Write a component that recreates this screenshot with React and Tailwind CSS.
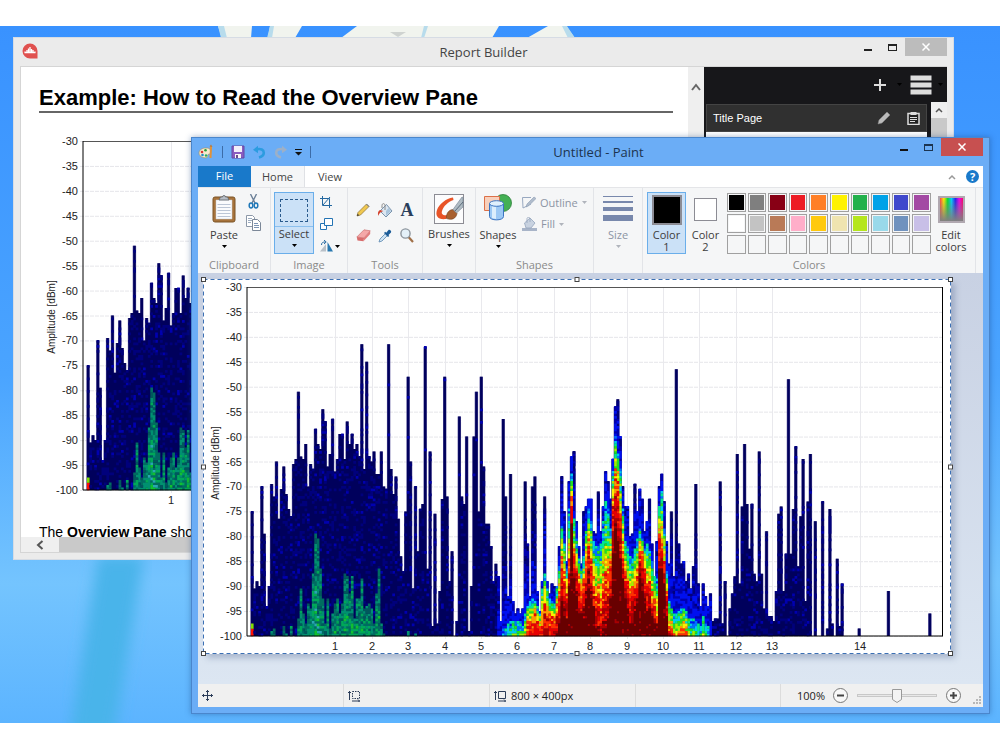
import React, { useState } from "react";

const LEVELS = [
  -75, -90.5, -89, -90, -70, -79.5, -94, -90, -69.5, -72, -65, -76.5, -70.5, -66, -71.5, -74.5, -76, -65.5, -64.5, -51,
  -64, -64.5, -61.5, -70, -65.5, -66.5, -58.5, -61.5, -62.5, -54.5, -57, -66, -63.5, -56.5, -67, -64.5, -59.5, -59.5, -64.5, -57,
  -61.5, -59.5, -62.5, -61.5, -64, -41.5, -66.5, -45, -64, -65, -63, -67.5, -67.5, -63, -70, -70.5, -41.5, -66.5, -71.5, -68,
  -76.5, -84, -87, -75, -48, -65, -90.5, -70, -83, -74.5, -73.5, -42, -86.5, -63, -98, -75.5, -97.5, -91, -72.5, -48,
  -72, -89, -83, -100, -97, -56, -72, -73.5, -60, -99, -90, -60, -51, -75, -48, -66, -77.5, -77.5, -82, -89,
  -85.5, -88, -97, -56.5, -72, -92, -67.5, -93, -95.5, -94.5, -95.5, -94.5, -69, -81.5, -92, -70, -68, -91, -95, -89,
  -72, -89, -91.5, -89.5, -90, -90, -82, -68, -75, -85, -69, -64, -63, -77, -82, -85.5, -75, -74, -72.5, -72.5,
  -79, -79.5, -71, -79, -74, -67, -69, -72.5, -64.5, -54, -52.5, -60, -70, -74, -74, -80, -79.5, -69.5, -75, -70.5,
  -72.5, -79, -77, -72.5, -81.5, -88, -81, -70, -67.5, -73, -81, -85.5, -75, -88, -46.5, -81.5, -85.5, -85, -89, -87.5,
  -90.5, -86, -69.5, -89.5, -94, -89.5, -92, -94, -91.5, -97, -96.5, -96.5, -69, -97.5, -89, -100, -94.5, -91.5, -88, -63.5,
  -89.5, -74, -61.5, -73.5, -82.5, -73.5, -87.5, -89, -63, -87.5, -94.5, -79, -96, -96, -97, -91, -75.5, -74, -91, -83.5,
  -48.5, -83.5, -74.5, -62, -86, -76, -64.5, -93, -73, -63.5, -100, -77, -100, -100, -73, -100, -98.5, -74.5, -97.5, -100,
  -84.5, -98, -89.5,
];

const LONE_LEVELS = { 249: -98.5, 261: -91, 278: -95.5 };

// [bin, top of cyan, top of red, top of dark red] in dB
const HOT = [
  [101, -99, -110, -120], [105, -97, -108, -115], [107, -96.5, -104, -115], [111, -97, -104, -112],
  [113, -93, -98, -104], [116, -92, -96, -105], [118, -95, -98, -104], [119, -90, -96, -102],
  [120, -87, -94, -101], [122, -92, -96, -102], [124, -93, -97, -101], [126, -85, -92, -97],
  [127, -76, -85, -93], [129, -86, -92, -97], [130, -74, -86, -90], [131, -67, -73, -77],
  [132, -76, -84, -88], [134, -84, -89, -95], [135, -86, -91, -96], [136, -83, -90, -96],
  [137, -78, -85, -92], [138, -74, -82, -90], [139, -76, -86, -92], [140, -80, -91, -95],
  [141, -81, -93, -98], [143, -81, -94, -100], [145, -72, -90, -98], [146, -74, -89, -96],
  [147, -78, -86, -93], [148, -66, -74, -83], [149, -59, -69, -78], [150, -63, -70, -80],
  [151, -66, -77, -84], [152, -74, -83, -88], [153, -80, -88, -92], [155, -83, -91, -97],
  [156, -84, -91, -97], [158, -80, -88, -93], [159, -78, -83, -88], [160, -80, -84, -90],
  [161, -82, -87, -93], [162, -81, -90, -95], [163, -82, -90, -94], [164, -84, -93, -96],
  [166, -88, -96, -98], [167, -73, -80, -86], [168, -70, -82, -86], [169, -78, -86, -90],
  [170, -86, -92, -96], [171, -92, -98, -104], [173, -95, -100, -110], [176, -94, -100, -110],
  [177, -94, -98, -110], [180, -96, -104, -112], [184, -97.5, -106, -114], [185, -95.5, -102, -112],
  [188, -99, -110, -118],
];

// weak carriers, which never get past green
const GREEN = {
  8: -98.5, 9: -98, 13: -97.5, 14: -99, 16: -97.5, 19: -96, 20: -90, 21: -95, 22: -97, 23: -93, 24: -94, 25: -87,
  26: -79, 27: -80, 28: -86, 29: -92, 30: -97, 31: -92, 32: -98, 33: -95, 34: -93, 35: -92, 36: -95, 37: -93,
  38: -87, 39: -87.5, 40: -91, 41: -87.5, 42: -96, 43: -92, 44: -92, 45: -88, 46: -94, 47: -93.5, 48: -93,
  49: -94, 50: -97, 51: -91, 52: -86, 53: -97, 54: -99, 64: -98.5, 67: -99,
};

const PALETTE = [
  "#00005c", "#00007c", "#0000b0", "#0010f0", "#0070ff", "#00c8f0", "#00e890", "#20e020",
  "#a0f000", "#f8f000", "#ff9800", "#ff3000", "#e80000", "#a80000", "#680000",
];
const WEAK = ["#00585c", "#006c60", "#009070", "#00a858", "#10c030", "#28a8b0"];

const PX_PER_DB = 349 / 70;
const BIN = 2.438;
const CELL = 2.5;

const X_TICKS = [88, 125, 161, 198, 234, 270, 307, 343, 380, 416, 452, 489, 525, 613];
const Y_TICKS = [-30, -35, -40, -45, -50, -55, -60, -65, -70, -75, -80, -85, -90, -95, -100];

const toY = (db) => (-30 - db) * PX_PER_DB;

const noise = (a, b) => {
  const n = Math.sin(a * 127.1 + b * 311.7) * 43758.5453;
  return n - Math.floor(n);
};

const hotAt = (bin) => {
  for (let k = 1; k < HOT.length; k++) {
    const [b0, ...v0] = HOT[k - 1];
    const [b1, ...v1] = HOT[k];
    if (bin >= b0 && bin <= b1) {
      const t = (bin - b0) / (b1 - b0);
      return v0.map((v, n) => v + (v1[n] - v) * t);
    }
  }
  return null;
};

const paletteIndex = (bin, rnd, db, top) => {
  const hot = hotAt(bin);
  if (!hot) {
    if (top > -62 && rnd < 0.97 && bin > 55) return 0;
    return rnd > 0.94 ? 2 : rnd > 0.74 ? 1 : 0;
  }
  const [cyan, red, dark] = hot;
  let idx;
  if (db > cyan) {
    idx = 3 - (db - cyan) / 6 + (rnd - 0.5) * 2.2;
    return Math.max(0, Math.min(3, Math.round(idx)));
  }
  if (db > red) idx = 4 + ((cyan - db) / (cyan - red)) * 7 + (rnd - 0.5) * 3.5;
  else if (db > dark) idx = 11 + ((red - db) / (red - dark)) * 2 + (rnd - 0.5) * 2.6;
  else idx = rnd > 0.93 ? 13 : 14;
  return Math.max(3, Math.min(14, Math.round(idx)));
};

const buildCells = () => {
  const cells = {};
  const add = (color, x, y) => {
    cells[color] = (cells[color] || "") + `M${x.toFixed(2)} ${y.toFixed(1)}h2.7v2.8h-2.7z`;
  };
  LEVELS.forEach((top, bin) => {
    const x = 3.9 + bin * BIN;
    for (let y = 349 - CELL; y > toY(top) - 1; y -= CELL) {
      const db = -30 - y / PX_PER_DB;
      const rnd = noise(bin + 1, Math.round(y));
      if (bin === 0 && db < -97) {
        add(db < -98 ? "#ff1000" : "#80e000", x, y);
      } else if (GREEN[bin] && db < GREEN[bin]) {
        const n = Math.floor(rnd * 3 + Math.min(2.9, ((GREEN[bin] - db) / 8) * 2 * noise(y, bin)));
        add(WEAK[n], x, y);
      } else {
        const idx = paletteIndex(bin, rnd, db, top);
        if (idx > 0) add(PALETTE[idx], x, y);
      }
    }
  });
  return cells;
};

const CELLS = buildCells();

const ALL_LEVELS = [
  ...LEVELS.map((v, bin) => [bin, v]),
  ...Object.entries(LONE_LEVELS).map(([bin, v]) => [Number(bin), v]),
].filter(([, v]) => v > -100);

const bars = (offset, width) =>
  ALL_LEVELS.map(([bin, v]) => `M${(offset + bin * BIN).toFixed(2)} ${toY(v).toFixed(1)}h${width}V349h-${width}z`).join("");

const BAR_EDGES = bars(3.4, 3.4);
const BAR_CORES = bars(3.9, 2.45);

const Spectrum = () => (
  <svg
    width="748"
    height="375"
    viewBox="0 0 748 375"
    className="block shrink-0"
    fontFamily="'Liberation Sans', sans-serif"
    fontSize="11"
    fill="#222"
  >
    <rect width="748" height="375" fill="#fff" />
    <g transform="translate(44 8)">
      {Y_TICKS.map((t) => (
        <line key={t} x1="-3" x2="696" y1={toY(t) + 0.5} y2={toY(t) + 0.5} stroke="#e6e6ea" strokeDasharray="4 1" />
      ))}
      {X_TICKS.map((x) => (
        <line key={x} x1={x + 0.5} x2={x + 0.5} y1="0" y2="352" stroke="#e9e9ed" />
      ))}
      <path d={BAR_EDGES} fill="#5a549c" />
      <path d={BAR_CORES} fill="#00005c" />
      {Object.entries(CELLS).map(([color, d]) => (
        <path key={color} d={d} fill={color} />
      ))}
      <path d="M0 .5H696" stroke="#555" strokeWidth="1" />
      <path d="M0 0V349M695.5 0V349M0 349H696" stroke="#000" strokeWidth="1" fill="none" />
      {Y_TICKS.map((t) => (
        <text key={t} x="-5" y={toY(t) + 4} textAnchor="end">{t}</text>
      ))}
      {X_TICKS.map((x, i) => (
        <text key={x} x={x} y="363" textAnchor="middle">{i + 1}</text>
      ))}
      <text transform="translate(-28 176) rotate(-90)" textAnchor="middle" fontSize="10">Amplitude [dBm]</text>
    </g>
  </svg>
);

const Caret = ({ className = "text-black" }) => (
  <svg width="5" height="3" viewBox="0 0 5 3" className={className}>
    <path d="M0 0h5L2.5 3z" fill="currentColor" />
  </svg>
);

/* Report Builder */

const ReportWindow = () => (
  <section className="absolute top-[11px] right-[46px] bottom-[163px] left-[13px] flex flex-col border border-[#d6dce4] bg-[#ebebeb] px-1.5 pb-1.5">
    <header className="relative flex h-7 shrink-0 items-start">
      <svg width="16" height="16" viewBox="0 0 16 16" className="mt-[5px] ml-0.5">
        <path d="M8 .5a7.5 7.5 0 0 1 7.5 7.5v7.5H8A7.5 7.5 0 1 1 8 .5z" fill="#e0514f" />
        <path d="M3 9.500v-1M5 10V7M6.500 10V5.500M8 10V4M9.500 10V6M11 10V7M13 9.500v-1M2.500 9.500h11" stroke="#fff" strokeWidth="1.300" />
      </svg>
      <h1 className="absolute inset-x-0 top-1 text-center text-[13px] leading-5 text-[#444]">Report Builder</h1>
      <div className="relative ml-auto flex items-start">
        <button aria-label="Minimize" className="flex h-[18px] w-[25px] items-center justify-center">
          <span className="mt-1.5 h-0.5 w-2 bg-[#222]" />
        </button>
        <button aria-label="Maximize" className="flex h-[18px] w-[25px] items-center justify-center">
          <span className="h-[7px] w-[9px] border border-t-2 border-[#222]" />
        </button>
        <button aria-label="Close" className="flex h-[18px] w-[42px] items-center justify-center bg-[#bcbcbc]">
          <svg width="8" height="8" viewBox="0 0 8 8"><path d="M.5.500l7 7M7.500.500l-7 7" stroke="#fff" strokeWidth="1.500" /></svg>
        </button>
      </div>
    </header>
    <div className="flex min-h-0 flex-1 border border-r-0 border-[#d5d5d5]">
      <div className="flex min-w-0 flex-1 flex-col bg-white">
        <article className="min-h-0 flex-1 overflow-hidden pt-[18px] pr-[15px] pl-[18px] font-['Liberation_Sans',Arial,sans-serif] text-black">
          <h2 className="border-b-2 border-[#666] text-[22px] leading-[26px] font-bold whitespace-nowrap">Example: How to Read the Overview Pane</h2>
          <div className="mt-5 overflow-hidden">
            <Spectrum />
          </div>
          <p className="mt-3.5 text-sm leading-5 whitespace-nowrap">The <b>Overview Pane</b> shows</p>
        </article>
        <div className="flex h-[15px] shrink-0 bg-[#c9c9c9]">
          <button aria-label="Scroll left" className="flex w-[38px] items-center justify-center bg-[#efefef]">
            <svg width="8" height="10" viewBox="0 0 8 10"><path d="M6.500 1L2 5l4.500 4" fill="none" stroke="#555" strokeWidth="2" /></svg>
          </button>
        </div>
      </div>
      <button aria-label="Scroll up" className="flex w-4 justify-center bg-[#efefef] pt-4">
        <svg width="10" height="8" viewBox="0 0 10 8"><path d="M1 7l4-5 4 5" fill="none" stroke="#666" strokeWidth="2" /></svg>
      </button>
      <aside className="w-[243px] bg-[#17171a]">
        <div className="flex h-[35px] items-center justify-end gap-2 pr-1 pl-2">
          <button aria-label="Add page" className="flex items-center gap-2.5">
            <svg width="14" height="14" viewBox="0 0 14 14"><path d="M7 1v12M1 7h12" stroke="#ddd" strokeWidth="2" /></svg>
            <Caret />
          </button>
          <button aria-label="Menu" className="flex items-center gap-1.5">
            <svg width="22" height="22" viewBox="0 0 22 22" fill="#ddd"><path d="M0 1h22v6H0zM0 8h22v6H0zM0 15h22v6H0z" stroke="#17171a" /></svg>
            <Caret />
          </button>
        </div>
        <div className="flex">
          <div className="ml-0.5 flex-1">
            <div className="mt-0.5 flex h-7 items-center gap-4 border border-[#444] bg-[#303030] px-1.5">
              <span className="flex-1 font-['Liberation_Sans',Arial,sans-serif] text-[11px] leading-4 text-white">Title Page</span>
              <button aria-label="Edit page">
                <svg width="14" height="14" viewBox="0 0 14 14"><path d="M1 13l1-4 8-8 3 3-8 8z" fill="#bbb" stroke="#888" strokeWidth=".5" /></svg>
              </button>
              <button aria-label="Copy page">
                <svg width="13" height="14" viewBox="0 0 13 14">
                  <path d="M1 2.500h11v11H1z" fill="#222" stroke="#ddd" strokeWidth="1.500" />
                  <path d="M3.500 1h6v3h-6z" fill="#ddd" />
                  <path d="M3 6.500h7M3 8.500h7M3 10.500h5" stroke="#ddd" />
                </svg>
              </button>
            </div>
            <div className="h-80 bg-white" />
          </div>
          <div className="ml-1 w-4 bg-[#c9c9c9]">
            <button aria-label="Scroll list up" className="flex h-4 w-full items-center justify-center bg-[#efefef]">
              <svg width="8" height="6" viewBox="0 0 8 6"><path d="M1 5l3-3 3 3" fill="none" stroke="#555" strokeWidth="1.500" /></svg>
            </button>
          </div>
        </div>
      </aside>
    </div>
  </section>
);

/* Paint icons */

const PaletteIcon = () => (
  <svg width="16" height="16" viewBox="0 0 16 16">
    <path d="M1 9c0-3 3-5 7-5s5 2 5 4-2 2-3 2.500.5 2-1 3S1 13.500 1 9z" fill="#f4ead0" stroke="#a08850" strokeWidth=".6" />
    <circle cx="4" cy="8" r="1.300" fill="#d33" /><circle cx="7.500" cy="6.200" r="1.300" fill="#2a9d3a" />
    <circle cx="4.500" cy="11" r="1.300" fill="#28c" /><circle cx="8" cy="11.500" r="1.200" fill="#28b060" />
    <path d="M12 2l2 1-.5 11h-2z" fill="#e0923c" /><path d="M11.500 2.500l1.500-2 1.500 2.500" fill="#c07830" />
  </svg>
);

const SaveIcon = () => (
  <svg width="14" height="14" viewBox="0 0 14 14">
    <path d="M1 1h12v12H1z" fill="#8a5cc0" stroke="#6448a4" />
    <path d="M3 1h8v6H3z" fill="#f2effa" /><path d="M4 9h6v4H4z" fill="#f7f4f4" /><path d="M5 10h2v3H5z" fill="#6a4c90" />
  </svg>
);

const UndoIcon = ({ flip, color }) => (
  <svg width="13" height="14" viewBox="0 0 13 14" className={flip ? "-scale-x-100" : ""}>
    <path d="M3 4.500C8 3 10.800 5 10.800 7.800c0 2-1.500 3.800-4.800 4.700" fill="none" stroke={color} strokeWidth="2.600" />
    <path d="M0 4.800L5 .800v7.500z" fill={color} />
  </svg>
);

const PasteIcon = () => (
  <svg width="24" height="29" viewBox="0 0 24 29">
    <rect x="1" y="3" width="22" height="25" rx="2" fill="#a8743c" stroke="#7c5426" />
    <path d="M4 6h16v19H4z" fill="#fafbfd" stroke="#c4c8d0" strokeWidth=".5" />
    <path d="M5.500 10.500h13M5.500 13.500h13M5.500 16.500h13M5.500 19.500h13M5.500 22.500h13" stroke="#bcc6d6" />
    <path d="M7 6l1.500-3h2a1.500 1.500 0 0 1 3 0h2L17 6z" fill="#b8bec6" stroke="#5c626a" strokeWidth=".8" />
  </svg>
);

const ScissorsIcon = () => (
  <svg width="11" height="15" viewBox="0 0 11 15" fill="none">
    <path d="M2.500 0l4.500 9M8.500 0L4 9" stroke="#6c8098" strokeWidth="1.400" />
    <ellipse cx="3" cy="11.500" rx="1.800" ry="2.400" stroke="#2078b8" strokeWidth="1.500" />
    <ellipse cx="8" cy="11.500" rx="1.800" ry="2.400" stroke="#2078b8" strokeWidth="1.500" />
  </svg>
);

const CopyIcon = () => (
  <svg width="15" height="16" viewBox="0 0 15 16">
    <path d="M.5.500h6l2 2v9h-8z" fill="#fff" stroke="#8c98a8" />
    <path d="M2 3.500h4M2 5.500h4M2 7.500h3" stroke="#9cacc0" />
    <path d="M6.500 4.500h5l3 3v8h-8z" fill="#fff" stroke="#7c8898" />
    <path d="M8 8.500h4M8 10.500h5M8 12.500h5" stroke="#7c94b4" />
  </svg>
);

const CropIcon = () => (
  <svg width="12" height="12" viewBox="0 0 12 12" fill="none" stroke="#2468a0">
    <path d="M2.500 0v9.500H12M0 2.500h9.500V12M3 9l7-8" />
  </svg>
);

const ResizeIcon = () => (
  <svg width="13" height="12" viewBox="0 0 13 12" fill="#fff" stroke="#2474b4">
    <path d="M.5 5.500h6v6h-6z" /><path d="M4.500.500h8v7h-8z" />
  </svg>
);

const RotateIcon = () => (
  <svg width="13" height="12" viewBox="0 0 13 12">
    <path d="M0 11.500L6 4v7.500z" fill="#b8c0c8" /><path d="M7.500 2v9.500H13z" fill="#2878b0" />
    <path d="M1.500 5C1.500 2.500 3 2 5 2M4 0l2.200 2L4 4" fill="none" stroke="#2468a0" />
  </svg>
);

const PencilIcon = () => (
  <svg width="14" height="14" viewBox="0 0 14 14">
    <path d="M1 13l1-3.500L10.500 1 13 3.500 4.500 12z" fill="#f0c850" stroke="#8c7030" strokeWidth=".7" />
    <path d="M1 13l.7-2.200 1.500 1.500z" fill="#333" /><path d="M10 1.500l.7-.8 2.700 2.500-.8.800z" fill="#888" />
  </svg>
);

const BucketIcon = () => (
  <svg width="16" height="15" viewBox="0 0 16 15">
    <path d="M3 8l6.500-6.500L15 8l-6 6z" fill="#dce6f0" stroke="#6c88a4" strokeWidth=".9" />
    <path d="M9 8l2.500-3L14 8l-5 5z" fill="#a8c4dc" />
    <path d="M3 7C1 8 .5 10 1.300 13c.8-2.500 1.500-3.500 5-5z" fill="#d44430" /><path d="M8 7V2.500C8 0 5 0 5 2.500V5" fill="none" stroke="#888" />
  </svg>
);

const EraserIcon = () => (
  <svg width="15" height="13" viewBox="0 0 15 13">
    <path d="M.8 8L8 .800l6.200 1L8 9z" fill="#f4a8a8" stroke="#c46868" strokeWidth=".6" />
    <path d="M.8 8L8 9l-.5 3.300-6-.800z" fill="#d86c6c" /><path d="M8 9l6.200-7.200V5l-6.700 7.300z" fill="#e07c7c" />
  </svg>
);

const DropperIcon = () => (
  <svg width="14" height="14" viewBox="0 0 14 14">
    <path d="M1 13l1-3 5.500-5.500 2 2L4 12z" fill="#d0e4f4" stroke="#5c88b0" strokeWidth=".8" />
    <path d="M6 4l1.200-1.200 1 1L10.500 1c1-1 3.500 1 2.500 2.500L10.500 6l.7 1L10 8z" fill="#1c5c98" />
  </svg>
);

const MagnifierIcon = () => (
  <svg width="14" height="15" viewBox="0 0 14 15">
    <path d="M8.500 9l4.500 5" stroke="#a07048" strokeWidth="2.200" />
    <circle cx="5.500" cy="5.500" r="4.600" fill="#e4f0f8" stroke="#8c949c" strokeWidth="1.400" />
  </svg>
);

const BrushIcon = () => (
  <svg width="30" height="30" viewBox="0 0 30 30">
    <rect x=".5" y=".5" width="29" height="29" fill="#fcfcfd" stroke="#8c8c94" />
    <path d="M19 3.500C12 4.500 5 10 3 16c-2 6 1 10 9 9l2-4c-5 1-7-1-6-4C9.500 12 14 8 19.500 6z" fill="#e85428" />
    <path d="M12.500 24.500c-.5-6 3-9 7-9l3.500 4c-1 5-5 7-10.500 5z" fill="#a86030" stroke="#70401c" strokeWidth=".6" />
    <path d="M19 15.500L28 3l1 .5V13l-6.500 6z" fill="#b0bcc4" stroke="#708090" strokeWidth=".6" />
    <path d="M21 17l8-9" stroke="#5c6c7c" />
  </svg>
);

const ShapesIcon = () => (
  <svg width="28" height="27" viewBox="0 0 28 27">
    <circle cx="19" cy="9" r="8.500" fill="#44b054" stroke="#2c8038" strokeWidth=".8" />
    <path d="M.5 2.500h15v14H.5z" fill="#f8d0bc" stroke="#dc7048" />
    <path d="M5.500 9.500v13c0 4.500 14 4.500 14 0v-13z" fill="#9cc8f4" stroke="#3c74c0" />
    <path d="M8 12v12l4 1V12z" fill="#dceefc" />
    <ellipse cx="12.500" cy="9.500" rx="7" ry="2.800" fill="#e0f0fc" stroke="#3c74c0" />
  </svg>
);

const OutlineIcon = () => (
  <svg width="14" height="13" viewBox="0 0 14 13">
    <path d="M9 1.500H.5L1 12l8-4" fill="none" stroke="#98a8c0" /><path d="M4 11l1-3 7-7 2 1.500-7 7z" fill="#b0bccc" stroke="#8c9cb4" strokeWidth=".6" />
  </svg>
);

const FillIcon = () => (
  <svg width="15" height="14" viewBox="0 0 15 14">
    <path d="M0 11h15v3H0z" fill="#a8b4c8" /><path d="M2.500 6L8 1l5 5-4 5H4z" fill="#c8d2e0" stroke="#94a4bc" strokeWidth=".8" />
    <path d="M5 6V1.500C5 0 8 0 8 1.500V5" fill="none" stroke="#94a4bc" strokeWidth=".8" />
  </svg>
);

const Group = ({ label, className = "", children }) => (
  <div className={`flex shrink-0 flex-col border-r border-[#e2e4e8] ${className}`}>
    <div className="flex min-h-0 flex-1 pt-1">{children}</div>
    <div className="h-4 text-center leading-4 text-[#8a8a8a]">{label}</div>
  </div>
);

const SWATCHES = [
  "#000000", "#7f7f7f", "#880015", "#ed1c24", "#ff7f27", "#fff200", "#22b14c", "#00a2e8", "#3f48cc", "#a349a4",
  "#ffffff", "#c3c3c3", "#b97a57", "#ffaec9", "#ffc90e", "#efe4b0", "#b5e61d", "#99d9ea", "#7092be", "#c8bfe7",
  "", "", "", "", "", "", "", "", "", "",
];

const Ribbon = () => (
  <div className="flex h-[86px] shrink-0 overflow-hidden border-t border-[#e4e5e8] bg-[#f5f6f7] text-[11px] leading-3 text-[#3c3c3c]">
    <Group label="Clipboard" className="w-[73px]">
      <button className="ml-2.5 flex w-8 flex-col items-center pt-0.5">
        <PasteIcon />
        <span className="mt-1.5 mb-1">Paste</span>
        <Caret />
      </button>
      <div className="ml-1.5 flex flex-col items-center gap-1.5 pt-0.5">
        <button aria-label="Cut"><ScissorsIcon /></button>
        <button aria-label="Copy"><CopyIcon /></button>
      </div>
    </Group>
    <Group label="Image" className="w-[77px]">
      <button className="ml-[3px] flex h-[62px] w-10 flex-col items-center border border-[#6aaeea] bg-[#cbe1f7]">
        <span className="mt-1.5 h-[23px] w-7 shrink-0 border border-dashed border-[#2a5a8c]" />
        <span className="mt-1 mb-1 w-full border-t border-[#8cc0ee] pt-px">Select</span>
        <Caret />
      </button>
      <div className="ml-1.5 flex flex-col gap-2.5 pt-1">
        <button aria-label="Crop"><CropIcon /></button>
        <button aria-label="Resize"><ResizeIcon /></button>
        <button aria-label="Rotate" className="flex items-center gap-0.5"><RotateIcon /><Caret /></button>
      </div>
    </Group>
    <Group label="Tools" className="w-[75px]">
      <div className="grid flex-1 grid-cols-3 content-start items-center justify-items-center gap-y-2.5 px-1 pt-2.5">
        <button aria-label="Pencil"><PencilIcon /></button>
        <button aria-label="Fill with color"><BucketIcon /></button>
        <button aria-label="Text" className="font-['Liberation_Serif',serif] text-lg leading-4 font-bold text-[#2a3f5c]">A</button>
        <button aria-label="Eraser"><EraserIcon /></button>
        <button aria-label="Color picker"><DropperIcon /></button>
        <button aria-label="Magnifier"><MagnifierIcon /></button>
      </div>
    </Group>
    <Group label="" className="w-[53px]">
      <button className="flex flex-1 flex-col items-center pt-0.5">
        <BrushIcon />
        <span className="mt-1 mb-1">Brushes</span>
        <Caret />
      </button>
    </Group>
    <Group label="Shapes" className="w-[118px]">
      <button className="ml-0.5 flex w-10 flex-col items-center pt-0.5">
        <ShapesIcon />
        <span className="mt-2 mb-1">Shapes</span>
        <Caret />
      </button>
      <div className="ml-1 flex flex-col gap-2 pt-1 text-[#8c94a4]">
        <button className="flex items-center gap-1"><OutlineIcon />Outline<Caret className="text-[#b0b4bc]" /></button>
        <button className="flex items-center gap-1"><FillIcon />Fill<Caret className="text-[#b0b4bc]" /></button>
      </div>
    </Group>
    <Group label="" className="w-[49px]">
      <button className="flex flex-1 flex-col items-center pt-1 text-[#8c94a4]">
        <svg width="30" height="26" viewBox="0 0 30 26" fill="#7888ac"><path d="M0 0h30v1H0zM0 5h30v2H0zM0 11h30v4H0zM0 19h30v6H0z" /></svg>
        <span className="mt-[7px] mb-1">Size</span>
        <Caret className="text-[#b0b4bc]" />
      </button>
    </Group>
    <Group label="Colors" className="w-[333px]">
      <button className="ml-1 flex h-[62px] w-[39px] flex-col items-center border border-[#6aaeea] bg-[#cbe1f7]">
        <span className="mt-0.5 h-[30px] w-[30px] shrink-0 border-2 border-[#8c8c94] bg-black" />
        <span className="mt-1 block">Color</span>
        <span className="block">1</span>
      </button>
      <button className="flex h-[62px] w-[39px] flex-col items-center">
        <span className="mt-1.5 h-[23px] w-[23px] shrink-0 border border-[#8c8c94] bg-white" />
        <span className="mt-2 block">Color</span>
        <span className="block">2</span>
      </button>
      <div className="ml-0.5 grid h-[62px] w-[204px] grid-cols-10 grid-rows-3 gap-0.5 pt-px">
        {SWATCHES.map((color, i) => (
          <button
            key={i}
            aria-label={`Color swatch ${i + 1}`}
            className="border border-[#a0a0a0] bg-[#f5f6f7] p-px"
          >
            <span className="block h-full w-full" style={{ backgroundColor: color || "transparent" }} />
          </button>
        ))}
      </div>
      <button className="ml-0.5 flex w-9 flex-col items-center pt-1">
        <span className="h-[27px] w-[27px] shrink-0 border-2 border-[#b0a8b0] bg-[linear-gradient(to_bottom,transparent,#808080),linear-gradient(to_right,#f44,#fe0,#0d3,#0cf,#22e,#e0e,#f06)]" />
        <span className="mt-1.5 block">Edit</span>
        <span className="block">colors</span>
      </button>
    </Group>
  </div>
);

const HANDLES = [
  "-top-0.5 -left-0.5", "-top-0.5 left-1/2 -translate-x-1/2", "-top-0.5 -right-0.5",
  "top-1/2 -left-0.5 -translate-y-1/2", "top-1/2 -right-0.5 -translate-y-1/2",
  "-bottom-0.5 -left-0.5", "-bottom-0.5 left-1/2 -translate-x-1/2", "-bottom-0.5 -right-0.5",
];

const StatusBar = () => {
  const [zoom, setZoom] = useState(50);

  return (
    <footer className="flex h-[23px] shrink-0 items-center bg-[#f0f0f0] text-[11px] leading-4 text-[#222]">
      <div className="flex h-full w-[146px] items-center border-r border-[#dcdcdc] pl-1">
        <svg width="11" height="11" viewBox="0 0 11 11"><path d="M5.500 0v11M0 5.500h11M4 2l1.500-1.500L7 2M4 9l1.500 1.500L7 9M2 4L.5 5.500 2 7M9 4l1.500 1.500L9 7" fill="none" stroke="#2c3c58" /></svg>
      </div>
      <div className="flex h-full w-[146px] items-center border-r border-[#dcdcdc] pl-1">
        <svg width="13" height="12" viewBox="0 0 13 12" fill="none" stroke="#2c3c58"><path d="M1.500 10V1M0 3l1.500-1.500L3 3M4 11h8M10 9.500l1.500 1.500L10 12.500" /><path d="M4.500 1.500h7v7h-7z" strokeDasharray="1.500 1" /></svg>
      </div>
      <div className="flex h-full w-[146px] items-center gap-1 border-r border-[#dcdcdc] pl-1">
        <svg width="13" height="12" viewBox="0 0 13 12" fill="none" stroke="#2c3c58"><path d="M1.500 10V1M0 3l1.500-1.500L3 3M4 11h8M10 9.500l1.500 1.500L10 12.500M4.500 1.500h7v7h-7z" /></svg>
        800 × 400px
      </div>
      <div className="h-full w-[145px] border-r border-[#dcdcdc]" />
      <div className="relative flex flex-1 items-center justify-end gap-2 pr-[22px]">
        <label htmlFor="zoom">100%</label>
        <button aria-label="Zoom out" onClick={() => setZoom(Math.max(0, zoom - 10))}>
          <svg width="15" height="15" viewBox="0 0 15 15"><circle cx="7.500" cy="7.500" r="7" fill="#f8f8f8" stroke="#777" /><path d="M4 7.500h7" stroke="#444" strokeWidth="2" /></svg>
        </button>
        <div className="relative mx-px h-4 w-[80px]">
          <svg width="80" height="16" viewBox="0 0 80 16">
            <rect x=".5" y="6.500" width="79" height="2" fill="#e8e8e8" stroke="#c8c8c8" />
            <path d="M35.500 1.500h9v10l-4.500 3-4.500-3z" fill="#f4f4f4" stroke="#999" />
          </svg>
          <input
            id="zoom"
            type="range"
            value={zoom}
            onChange={(e) => setZoom(Number(e.target.value))}
            className="absolute inset-0 h-full w-full opacity-0"
          />
        </div>
        <button aria-label="Zoom in" onClick={() => setZoom(Math.min(100, zoom + 10))}>
          <svg width="15" height="15" viewBox="0 0 15 15"><circle cx="7.500" cy="7.500" r="7" fill="#f8f8f8" stroke="#777" /><path d="M4 7.500h7M7.500 4v7" stroke="#444" strokeWidth="2" /></svg>
        </button>
        <svg width="8" height="8" viewBox="0 0 8 8" fill="#b8b8b8" className="absolute right-0.5 bottom-0"><path d="M6 0h2v2H6zM3 3h2v2H3zM6 3h2v2H6zM0 6h2v2H0zM3 6h2v2H3zM6 6h2v2H6z" /></svg>
      </div>
    </footer>
  );
};

const PaintWindow = () => (
  <section className="absolute top-[111px] right-[10px] bottom-[9px] left-[191px] flex flex-col border border-[#4a86cc] bg-[#6badf6] px-1.5 pb-1.5 shadow-[0_0_6px_rgba(20,60,120,0.4)]">
    <header className="relative flex h-7 shrink-0 items-start">
      <div className="flex h-7 items-center gap-2">
        <PaletteIcon />
        <span className="h-3 w-px bg-[#3c6ca8]" />
        <SaveIcon />
        <UndoIcon color="#2c9ce0" />
        <UndoIcon flip color="#9cb0c8" />
        <svg width="7" height="7" viewBox="0 0 7 7"><path d="M0 0h7v1H0zM0 3h7L3.500 6.500z" fill="#111" /></svg>
        <span className="h-3 w-px bg-[#3c6ca8]" />
      </div>
      <h1 className="absolute inset-x-0 top-1 pl-4 text-center text-[13px] leading-5 text-[#1c3450]">Untitled - Paint</h1>
      <div className="relative ml-auto flex items-start">
        <button aria-label="Minimize" className="flex h-[18px] w-[25px] items-center justify-center">
          <span className="mt-1.5 h-0.5 w-2 bg-[#111]" />
        </button>
        <button aria-label="Maximize" className="flex h-[18px] w-[25px] items-center justify-center">
          <span className="h-[7px] w-[9px] border border-t-2 border-[#1c3450]" />
        </button>
        <button aria-label="Close" className="flex h-[18px] w-[42px] items-center justify-center bg-[#c75050]">
          <svg width="8" height="8" viewBox="0 0 8 8"><path d="M.5.500l7 7M7.500.500l-7 7" stroke="#fff" strokeWidth="1.500" /></svg>
        </button>
      </div>
    </header>
    <nav className="flex h-[21px] shrink-0 bg-white text-[11px] leading-5 text-[#444]">
      <button className="w-[53px] bg-[#1979ca] pb-px text-white">File</button>
      <button className="-mb-px w-[54px] border-r border-[#dfe1e5] bg-[#f5f6f7]">Home</button>
      <button className="w-[50px]">View</button>
      <button aria-label="Collapse the ribbon" className="mr-2.5 ml-auto">
        <svg width="8" height="6" viewBox="0 0 8 6"><path d="M1 5l3-3 3 3" fill="none" stroke="#999" strokeWidth="1.500" /></svg>
      </button>
      <button aria-label="Help" className="my-1 mr-1 h-[13px] w-[13px] rounded-full bg-[#1979ca] text-[11px] leading-[13px] font-bold text-white">?</button>
    </nav>
    <Ribbon />
    <main className="min-h-0 flex-1 overflow-hidden bg-linear-to-b from-[#c8d1e3] to-[#dce6f2] pt-1.5 pl-[5px]">
      <div className="relative w-[748px] shadow-[4px_4px_6px_rgba(80,100,140,0.35)]">
        <Spectrum />
        <svg width="748" height="375" className="absolute inset-0" fill="none">
          <rect x=".5" y=".5" width="747" height="374" stroke="#fff" />
          <rect x=".5" y=".5" width="747" height="374" stroke="#3c70b4" strokeDasharray="4 3" />
        </svg>
        {HANDLES.map((pos) => (
          <span key={pos} className={`absolute h-[5px] w-[5px] border border-[#444] bg-white ${pos}`} />
        ))}
      </div>
    </main>
    <StatusBar />
  </section>
);

const Wallpaper = () => (
  <svg className="absolute inset-0 h-full w-full" viewBox="0 0 1000 697" preserveAspectRatio="none">
    <defs>
      <linearGradient id="sky" x1="0" y1="0" x2="0" y2="1">
        <stop offset="0" stopColor="#3992ff" />
        <stop offset=".5" stopColor="#4aa4ff" />
        <stop offset=".8" stopColor="#74c4fe" />
        <stop offset="1" stopColor="#5cb4ff" />
      </linearGradient>
      <filter id="soft"><feGaussianBlur stdDeviation="7" /></filter>
    </defs>
    <rect width="1000" height="697" fill="url(#sky)" />
    <path d="M98 530h46l-30 180H70z" fill="#48b4ea" filter="url(#soft)" />
    <path d="M218 0h34l-1 12h-29zM270 0h32l-7 12h-27zM357 0h142l-7 12H341zM548 0h18l9 12h-48z" fill="#f1f4ee" />
    <path d="M218 0h6l3 12h-6zM270 0h4l-2 12h-5zM424 0h4l-4 12h-3zM562 0h5l8 12h-7z" fill="#b8dcec" />
    <path d="M390 6h16l-8 5z" fill="#cfd3d0" />
  </svg>
);

export default function App() {
  return (
    <div className="min-h-screen bg-white py-[26px] font-['Open_Sans','Noto_Sans',sans-serif]">
      <div className="relative h-[calc(100vh-53px)] min-h-[600px] w-full overflow-hidden">
        <Wallpaper />
        <ReportWindow />
        <PaintWindow />
      </div>
    </div>
  );
}
